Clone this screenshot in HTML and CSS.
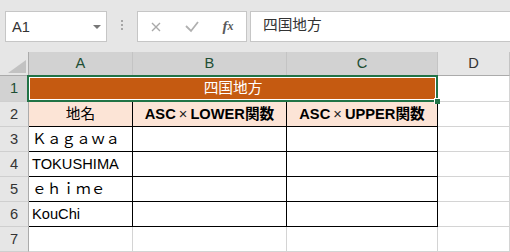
FILE: index.html
```html
<!DOCTYPE html>
<html lang="ja">
<head>
    <meta charset="UTF-8">
    <meta name="viewport" content="width=device-width, initial-scale=1.0">
    <title>四国地方</title>
    <link rel="stylesheet" href="styles.css">
</head>
<body>
    <div class="bar">
        <div class="namebox">
            <span>A1</span>
            <i class="arrow"></i>
        </div>
        <div class="dots"><i></i><i></i><i></i></div>
        <div class="btns">
            <span><svg width="10" height="10"><path d="M1 1L9 9M9 1L1 9" stroke="#a9a9a9" stroke-width="1.4"/></svg></span>
            <span><svg width="14" height="12"><path d="M1 5L6 10L13 1" fill="none" stroke="#b0b0b0" stroke-width="1.8"/></svg></span>
            <span class="fx">f<small>x</small></span>
        </div>
        <div class="formula">四国地方</div>
    </div>

    <div class="sheet">
        <!-- 列見出し -->
        <div class="corner"><svg width="28" height="23"><polygon points="8,21 26,21 26,8" fill="#c2c2c2"/></svg></div>
        <div class="ch on">A</div>
        <div class="ch on">B</div>
        <div class="ch on">C</div>
        <div class="ch">D</div>

        <div class="rh on">1</div>
        <div class="c title">四国地方</div>
        <div class="c"></div>

        <div class="rh">2</div>
        <div class="c t hd">地名</div>
        <div class="c t hd b">ASC<span class="mul">×</span>LOWER関数</div>
        <div class="c t hd b">ASC<span class="mul">×</span>UPPER関数</div>
        <div class="c"></div>

        <div class="rh">3</div>
        <div class="c t">Ｋａｇａｗａ</div>
        <div class="c t"></div>
        <div class="c t"></div>
        <div class="c"></div>

        <div class="rh">4</div>
        <div class="c t">TOKUSHIMA</div>
        <div class="c t"></div>
        <div class="c t"></div>
        <div class="c"></div>

        <div class="rh">5</div>
        <div class="c t">ｅｈｉｍｅ</div>
        <div class="c t"></div>
        <div class="c t"></div>
        <div class="c"></div>

        <div class="rh">6</div>
        <div class="c t">KouChi</div>
        <div class="c t"></div>
        <div class="c t"></div>
        <div class="c"></div>

        <div class="rh">7</div>
        <div class="c"></div>
        <div class="c"></div>
        <div class="c"></div>
        <div class="c"></div>
    </div>
</body>
</html>
```

FILE: styles.css
```css
body{
    margin: 0;
    background: #e6e6e6;
    font-family: "Liberation Sans", "Noto Sans CJK JP", sans-serif;
    font-size: 14.67px;
    color: #000;
}
/* 上のバー */
.bar{
    display: flex;
    align-items: flex-start;
    height: 52px;
    padding-top: 11px;
    box-sizing: border-box;
}
.namebox{
    display: flex;
    justify-content: space-between;
    align-items: flex-start;
    width: 102px;
    height: 31px;
    margin-left: 5px;
    padding: 0 5px 0 6px;
    box-sizing: border-box;
    background: #fff;
    border: 1px solid #c6c6c6;
    color: #333;
}
.namebox span{
    line-height: 25px;
    margin-top: 3px;
}
.arrow{
    align-self: center;
    width: 0;
    height: 0;
    border-left: 4px solid transparent;
    border-right: 4px solid transparent;
    border-top: 4px solid #777;
}
.dots{
    display: flex;
    flex-direction: column;
    align-items: center;
    gap: 2px;
    width: 30px;
    padding-top: 9px;
}
.dots i{
    width: 2px;
    height: 2px;
    background: #a6a6a6;
}
.btns{
    display: flex;
    width: 110px;
    height: 31px;
    box-sizing: border-box;
    background: #fff;
    border: 1px solid #c6c6c6;
}
.btns span{
    display: flex;
    align-items: center;
    justify-content: center;
    width: 36px;
}
.fx{
    font-family: "Liberation Serif", serif;
    font-style: italic;
    font-weight: bold;
    font-size: 15px;
    color: #5a5a5a;
}
.fx small{
    font-size: 12px;
}
.formula{
    flex: 1;
    height: 31px;
    margin-left: 3px;
    margin-right: -1px;
    padding-left: 12px;
    box-sizing: border-box;
    background: #fff;
    border: 1px solid #c6c6c6;
    line-height: 27px;
    color: #333;
}

/* シート */
.sheet{
    display: grid;
    grid-template-columns: 29px 104px 154px 151px 1fr;
    grid-template-rows: 24px 26px repeat(6, 25px);
}
.sheet > div{
    box-sizing: border-box;
    white-space: nowrap;
}
.corner{
    border-right: 1px solid #ababab;
    border-bottom: 1px solid #ababab;
}
.corner svg{
    display: block;
}
.ch{
    background: #e6e6e6;
    border-right: 1px solid #c4c4c4;
    border-bottom: 1px solid #ababab;
    text-align: center;
    line-height: 23px;
    color: #333;
}
.rh{
    background: #e6e6e6;
    border-right: 1px solid #ababab;
    border-bottom: 1px solid #cfcfcf;
    text-align: center;
    line-height: 23px;
    padding-top: 1px;
    color: #333;
}
.ch.on, .rh.on{
    background: #d2d2d2;
    color: #1e4e34;
}
.c{
    background: #fff;
    border-right: 1px solid #d4d4d4;
    border-bottom: 1px solid #d4d4d4;
    line-height: 23px;
    padding: 1px 3px 0;
    overflow: hidden;
}
.t{
    border-right-color: #000;
    border-bottom-color: #000;
}
.hd{
    background: #fce4d6;
    text-align: center;
}
.b{
    font-weight: bold;
}
.mul{
    display: inline-block;
    width: 1em;
    text-align: center;
    font-weight: normal;
    color: #222;
}
.title{
    grid-column: span 3;
    position: relative;
    overflow: visible;
    background: #c55a11;
    border-bottom-color: #000;
    color: #fff;
    text-align: center;
}
/* 選択枠 */
.title::before{
    content: "";
    position: absolute;
    left: -2px;
    top: -1px;
    right: -1px;
    bottom: -1px;
    border: 2px solid #217346;
    box-shadow: inset 0 0 0 1px #fff;
}
.title::after{
    content: "";
    position: absolute;
    right: -3px;
    bottom: -3px;
    width: 5px;
    height: 5px;
    background: #217346;
    border-left: 1px solid #fff;
    border-top: 1px solid #fff;
}
```
